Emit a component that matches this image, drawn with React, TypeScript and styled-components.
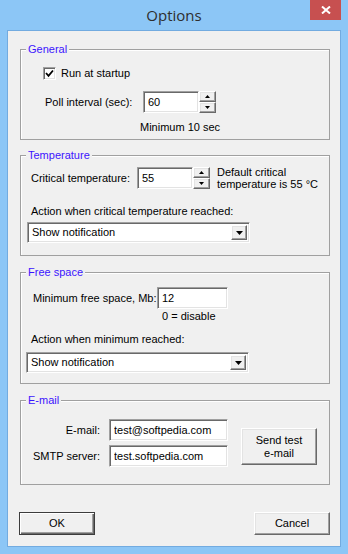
import React from 'react'
import styled, { createGlobalStyle } from 'styled-components'

const GlobalStyle = createGlobalStyle`
  html, body {
    margin: 0;
    padding: 0;
  }
  body {
    font-family: 'Liberation Sans', Arial, sans-serif;
    font-size: 11px;
    color: #000;
  }
  * {
    box-sizing: border-box;
  }
`

const Window = styled.div`
  width: 348px;
  height: 554px;
  background: #8cc6f6;
  display: flex;
  flex-direction: column;
`

const TitleBar = styled.div`
  height: 30px;
  flex: none;
  display: grid;
  grid-template-columns: 1fr auto 1fr;
`

const Title = styled.div`
  grid-column: 2;
  align-self: center;
  font-family: 'Open Sans', 'Noto Sans', sans-serif;
  font-size: 15px;
  line-height: 20px;
  color: #2e2e2e;
  margin-top: -1px;
`

const CloseButton = styled.div`
  grid-column: 3;
  justify-self: end;
  width: 31px;
  height: 20px;
  margin-right: 7px;
  background: #c75050;
  display: flex;
  align-items: center;
  justify-content: center;
`

const Client = styled.div`
  flex: 1;
  margin: 0 7px 7px 7px;
  border: 1px solid #72abe0;
  background: #f0f0f0;
  padding: 18px 10px 0 12px;
  display: flex;
  flex-direction: column;
`

const Group = styled.div<{ $height: number; $gap?: number }>`
  position: relative;
  height: ${p => p.$height}px;
  margin-top: ${p => p.$gap ?? 0}px;
  border: 1px solid #a0a0a0;
  box-shadow: inset 1px 1px #fff;
  display: flex;
  flex-direction: column;
  flex: none;
`

const Legend = styled.span`
  position: absolute;
  top: -7px;
  left: 5px;
  padding: 0 2px;
  line-height: 13px;
  background: #f0f0f0;
  color: #3c14ff;
`

const Row = styled.div<{ $indent?: number; $top?: number }>`
  display: flex;
  align-items: center;
  margin-left: ${p => p.$indent ?? 0}px;
  margin-top: ${p => p.$top ?? 0}px;
`

const Text = styled.span`
  line-height: 13px;
  white-space: nowrap;
`

const FieldLabel = styled.span<{ $width: number }>`
  width: ${p => p.$width}px;
  flex: none;
  line-height: 13px;
  white-space: nowrap;
`

const Note = styled.div`
  margin-left: 7px;
  line-height: 12px;
`

const TextBox = styled.input<{ $width: number }>`
  width: ${p => p.$width}px;
  height: 22px;
  flex: none;
  margin: 0;
  border: 1px solid;
  border-color: #a0a0a0 #fff #fff #a0a0a0;
  box-shadow: inset 1px 1px #696969, inset -1px -1px #e3e3e3;
  background: #fff;
  font: inherit;
  color: #000;
  padding: 0 0 1px 4px;
  outline: none;
`

const Spinner = styled.div`
  width: 17px;
  height: 22px;
  flex: none;
  display: flex;
  flex-direction: column;
`

const SpinButton = styled.div`
  flex: 1;
  border: 1px solid;
  border-color: #fff #696969 #696969 #fff;
  box-shadow: inset -1px -1px #a0a0a0, inset 1px 1px #e3e3e3;
  background: #f0f0f0;
  display: flex;
  align-items: center;
  justify-content: center;
`

const CheckBox = styled.div`
  width: 13px;
  height: 13px;
  flex: none;
  margin-right: 5px;
  border: 1px solid;
  border-color: #a0a0a0 #fff #fff #a0a0a0;
  box-shadow: inset 1px 1px #696969, inset -1px -1px #e3e3e3;
  background: #fff;
  display: flex;
  align-items: center;
  justify-content: center;
`

const Combo = styled.div<{ $width: number }>`
  width: ${p => p.$width}px;
  height: 21px;
  border: 1px solid;
  border-color: #a0a0a0 #fff #fff #a0a0a0;
  box-shadow: inset 1px 1px #696969, inset -1px -1px #e3e3e3;
  background: #fff;
  display: flex;
  align-items: stretch;
  padding: 2px;
`

const ComboText = styled.span`
  flex: 1;
  padding-left: 2px;
  line-height: 15px;
`

const ComboButton = styled.div`
  width: 16px;
  border: 1px solid;
  border-color: #fff #696969 #696969 #fff;
  box-shadow: inset -1px -1px #a0a0a0, inset 1px 1px #e3e3e3;
  background: #f0f0f0;
  display: flex;
  align-items: center;
  justify-content: center;
`

const MailGrid = styled.div`
  display: grid;
  grid-template-columns: 79px 119px;
  column-gap: 9px;
  row-gap: 4px;
  align-items: center;
`

const MailLabel = styled.span`
  text-align: right;
  line-height: 13px;
`

const PushButton = styled.button<{ $width: number; $height: number; $default?: boolean; $top?: number; $left?: number }>`
  width: ${p => p.$width}px;
  height: ${p => p.$height}px;
  margin: ${p => p.$top ?? 0}px 0 0 ${p => p.$left ?? 0}px;
  padding: 0;
  flex: none;
  font: inherit;
  line-height: 13px;
  color: #000;
  background: #f0f0f0;
  border: 1px solid;
  border-color: ${p => (p.$default ? '#3c3c3c' : '#fff #696969 #696969 #fff')};
  box-shadow: ${p =>
    p.$default
      ? 'inset 1px 1px #fff, inset -1px -1px #696969, inset -2px -2px #a0a0a0'
      : 'inset -1px -1px #a0a0a0, inset 1px 1px #e3e3e3'};
  align-self: flex-start;
`

const ButtonBar = styled.div`
  display: flex;
  justify-content: space-between;
  margin: 27px 0 0 -1px;
`

const Arrow = ({ up, size = 5 }: { up?: boolean; size?: number }) => {
  const h = Math.ceil(size / 2)
  return (
    <svg width={size} height={h} viewBox={`0 0 ${size} ${h}`} style={{ display: 'block' }}>
      <polygon
        points={up ? `0,${h} ${size},${h} ${size / 2},0` : `0,0 ${size},0 ${size / 2},${h}`}
        fill="#000"
      />
    </svg>
  )
}

const NumberField = ({ value, width }: { value: string; width: number }) => (
  <>
    <TextBox $width={width} defaultValue={value} />
    <Spinner>
      <SpinButton>
        <Arrow up />
      </SpinButton>
      <SpinButton>
        <Arrow />
      </SpinButton>
    </Spinner>
  </>
)

const ComboBox = ({ value }: { value: string }) => (
  <Combo $width={223}>
    <ComboText>{value}</ComboText>
    <ComboButton>
      <Arrow size={7} />
    </ComboButton>
  </Combo>
)

const App: React.FC = () => {
  return (
    <>
      <GlobalStyle />
      <Window>
        <TitleBar>
          <Title>Options</Title>
          <CloseButton>
            <svg width="10" height="8" viewBox="0 0 10 8">
              <path d="M1 0.5 L9 7.5 M9 0.5 L1 7.5" stroke="#fff" strokeWidth="2" />
            </svg>
          </CloseButton>
        </TitleBar>
        <Client>
          <Group $height={91}>
            <Legend>General</Legend>
            <Row $indent={22} $top={17}>
              <CheckBox>
                <svg width="9" height="9" viewBox="0 0 9 9">
                  <path d="M1 4 L3.5 6.8 L8 1.5" stroke="#000" strokeWidth="1.8" fill="none" />
                </svg>
              </CheckBox>
              <Text>Run at startup</Text>
            </Row>
            <Row $indent={24} $top={11}>
              <FieldLabel $width={98}>Poll interval (sec):</FieldLabel>
              <NumberField value="60" width={56} />
            </Row>
            <Row $indent={119} $top={8}>
              <Text>Minimum 10 sec</Text>
            </Row>
          </Group>

          <Group $height={101} $gap={15}>
            <Legend>Temperature</Legend>
            <Row $indent={10} $top={10}>
              <FieldLabel $width={106}>Critical temperature:</FieldLabel>
              <NumberField value="55" width={56} />
              <Note>
                Default critical
                <br />
                temperature is 55 °C
              </Note>
            </Row>
            <Row $indent={10} $top={15}>
              <Text>Action when critical temperature reached:</Text>
            </Row>
            <Row $indent={6} $top={4}>
              <ComboBox value="Show notification" />
            </Row>
          </Group>

          <Group $height={112} $gap={16}>
            <Legend>Free space</Legend>
            <Row $indent={12} $top={14}>
              <FieldLabel $width={124}>Minimum free space, Mb:</FieldLabel>
              <TextBox $width={71} defaultValue="12" />
            </Row>
            <Row $indent={141} $top={1}>
              <Text>0 = disable</Text>
            </Row>
            <Row $indent={10} $top={10}>
              <Text>Action when minimum reached:</Text>
            </Row>
            <Row $indent={5} $top={6}>
              <ComboBox value="Show notification" />
            </Row>
          </Group>

          <Group $height={85} $gap={16}>
            <Legend>E-mail</Legend>
            <Row $top={18}>
              <MailGrid>
                <MailLabel>E-mail:</MailLabel>
                <TextBox $width={119} defaultValue="test@softpedia.com" />
                <MailLabel>SMTP server:</MailLabel>
                <TextBox $width={119} defaultValue="test.softpedia.com" />
              </MailGrid>
              <PushButton $width={76} $height={37} $top={9} $left={13}>
                Send test
                <br />
                e-mail
              </PushButton>
            </Row>
          </Group>

          <ButtonBar>
            <PushButton $width={76} $height={23} $default>
              OK
            </PushButton>
            <PushButton $width={76} $height={23}>
              Cancel
            </PushButton>
          </ButtonBar>
        </Client>
      </Window>
    </>
  )
}

export default App
